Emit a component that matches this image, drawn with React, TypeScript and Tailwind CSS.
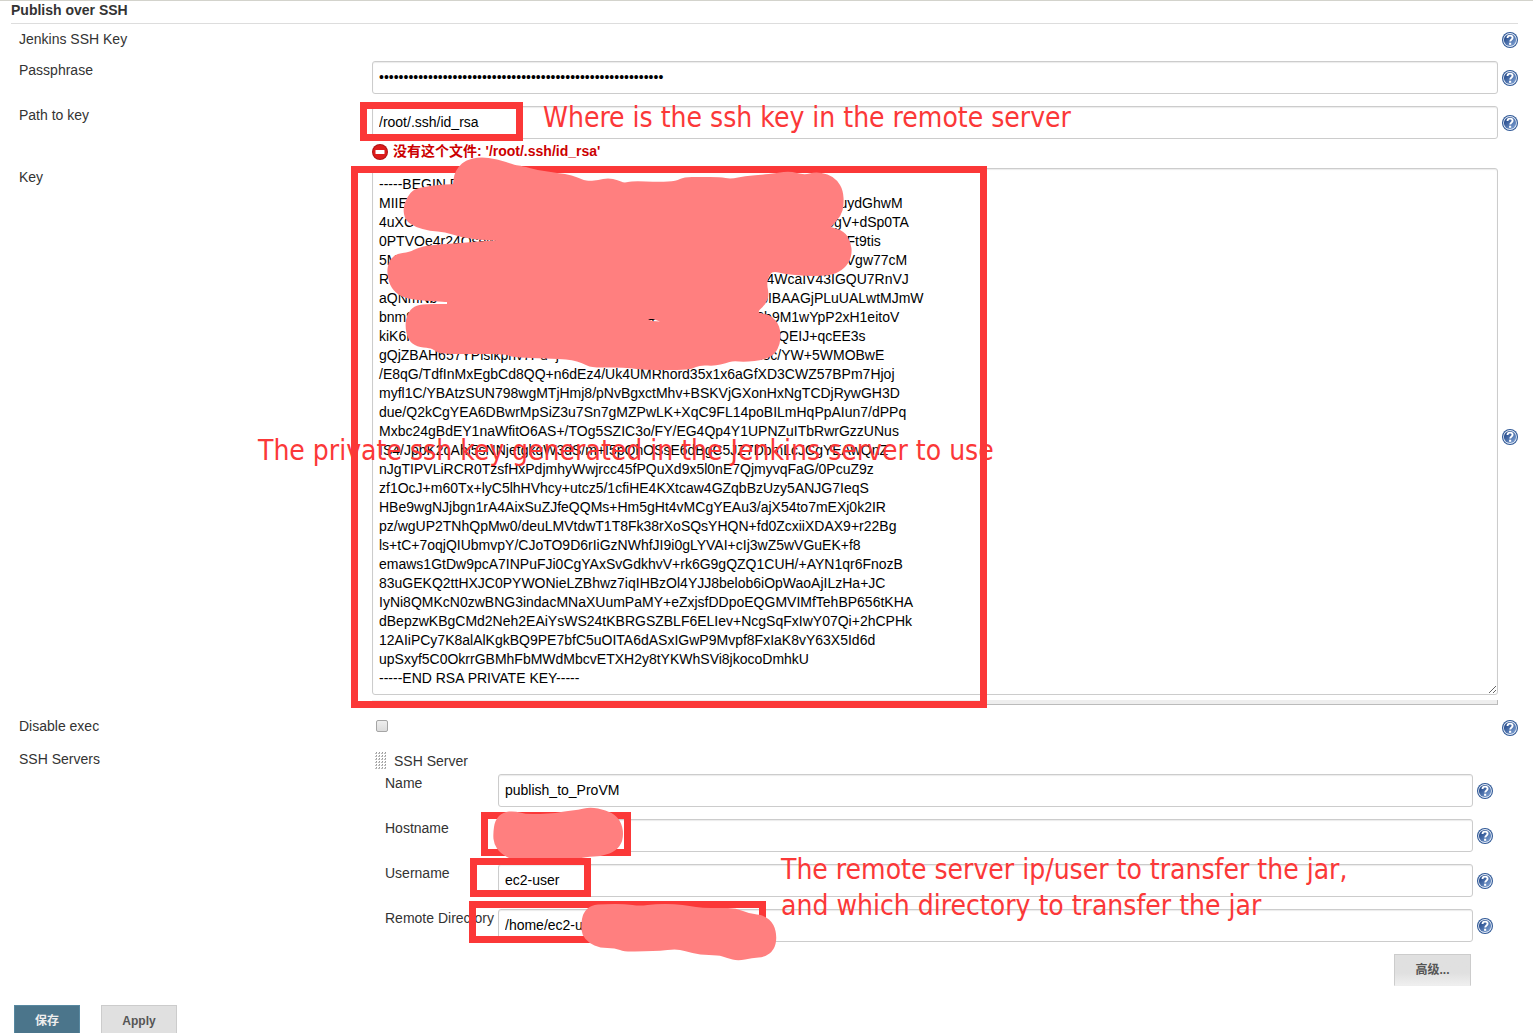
import React from "react";

type Point = [number, number];

/* Closed smooth outline through the midpoints of the given points. */
function smooth(points: Point[]): string {
  const mid = (a: Point, b: Point): Point => [(a[0] + b[0]) / 2, (a[1] + b[1]) / 2];
  const start = mid(points[points.length - 1], points[0]);
  let d = `M${start[0]} ${start[1]}`;
  points.forEach((p, i) => {
    const m = mid(p, points[(i + 1) % points.length]);
    d += `Q${p[0]} ${p[1]} ${m[0]} ${m[1]}`;
  });
  return d + "Z";
}

const KEY_MASK: Point[] = [
  [403, 208], [407, 197], [414, 189], [424, 187], [436, 185], [453, 184], [453, 184], [454, 175], [458, 167], [466, 160],
  [480, 157], [497, 159], [515, 165], [522, 166], [537, 170], [558, 173], [572, 175], [583, 180], [590, 181],
  [598, 180], [608, 178], [618, 180], [624, 183], [632, 181], [660, 182], [676, 181], [684, 177], [700, 177],
  [720, 177], [731, 179], [745, 176], [760, 175], [777, 173], [790, 171], [804, 175], [815, 172], [828, 174],
  [837, 180], [843, 190], [844, 205], [841, 216], [831, 227], [831, 227], [844, 231], [851, 242], [852, 255], [847, 266],
  [836, 274], [822, 276], [805, 276], [785, 274], [772, 271], [768, 278], [767, 285], [769, 295], [766, 304],
  [756, 313], [768, 314], [777, 321], [781, 332], [780, 344], [775, 354], [764, 360], [745, 362], [733, 361],
  [726, 363], [715, 366], [700, 365], [692, 369], [680, 370], [645, 370], [620, 367], [592, 368], [582, 363],
  [572, 360], [560, 359], [530, 358], [512, 357], [505, 354], [480, 354], [440, 354], [434, 350], [430, 348],
  [417, 347], [408, 340], [405, 326], [407, 314], [414, 306], [425, 304], [447, 304], [447, 304], [447, 302],
  [447, 302], [430, 301], [416, 300], [401, 297], [391, 288], [387, 275], [388, 263], [395, 254], [410, 252],
  [417, 248], [430, 245], [460, 243], [497, 240], [497, 240], [480, 240], [460, 237], [445, 232], [430, 231],
  [415, 227], [405, 220],
];

/* Sliver between two strokes where the text shows through. */
const KEY_HOLE = "M648 319L653 319L660 321.5L652 321Z";

const HOST_MASK: Point[] = [
  [493, 834], [495, 820], [503, 812], [515, 811], [525, 814], [540, 814], [556, 813], [566, 811], [578, 810],
  [590, 807], [606, 810], [617, 816], [623, 827], [623, 841], [616, 851], [603, 856], [585, 857], [575, 860],
  [560, 862], [548, 860], [530, 863], [514, 861], [500, 853], [494, 844],
];

const DIR_MASK: Point[] = [
  [581, 925], [583, 913], [591, 905], [605, 904], [625, 904], [640, 906], [655, 904], [675, 904], [690, 906],
  [702, 908], [720, 908], [736, 908], [750, 914], [764, 915], [774, 924], [777, 938], [774, 950], [765, 957],
  [752, 958], [738, 961], [727, 958], [718, 955], [700, 955], [685, 951], [675, 949], [660, 951], [645, 951],
  [625, 952], [615, 948], [600, 948], [589, 943], [582, 935],
];

const gap = (n: number) => " ".repeat(n);

const KEY_TEXT = [
  "-----BEGIN RSA PRIVATE KEY-----",
  "MIIE" + gap(111) + "uydGhwM",
  "4uXC" + gap(106) + "8gV+dSp0TA",
  "0PTVOe4r24Qsew" + gap(90) + "Ft9tis",
  "5M" + gap(115) + "Vgw77cM",
  "R" + gap(97) + "4WcaIV43IGQU7RnVJ",
  "aQNmNb" + gap(83) + "bIBAAGjPLuUALwtMJmW",
  "bnm9" + gap(60) + "4" + gap(26) + "6b9M1wYpP2xH1eitoV",
  "kiK6R" + gap(93) + "QEIJ+qcEE3s",
  "gQjZBAH657YPlsikphv7Pu" + gap(2) + "j" + gap(48) + "zN8c/YW+5WMOBwE",
  "/E8qG/TdfInMxEgbCd8QQ+n6dEz4/Uk4UMRhord35x1x6aGfXD3CWZ57BPm7Hjoj",
  "myfl1C/YBAtzSUN798wgMTjHmj8/pNvBgxctMhv+BSKVjGXonHxNgTCDjRywGH3D",
  "due/Q2kCgYEA6DBwrMpSiZ3u7Sn7gMZPwLK+XqC9FL14poBILmHqPpAIun7/dPPq",
  "Mxbc24gBdEY1naWfitO6AS+/TOg5SZIC3o/FY/EG4Qp4Y1UPNZuITbRwrGzzUNus",
  "IS4/JpbK2cAhi5sNNjetgkqW3dS/m+I5pQhOSsE6dBgC5JZ7DbmLcJCgYEAwQnZ",
  "nJgTIPVLiRCR0TzsfHxPdjmhyWwjrcc45fPQuXd9x5l0nE7QjmyvqFaG/0PcuZ9z",
  "zf1OcJ+m60Tx+lyC5lhHVhcy+utcz5/1cfiHE4KXtcaw4GZqbBzUzy5ANJG7IeqS",
  "HBe9wgNJjbgn1rA4AixSuZJfeQQMs+Hm5gHt4vMCgYEAu3/ajX54to7mEXj0k2IR",
  "pz/wgUP2TNhQpMw0/deuLMVtdwT1T8Fk38rXoSQsYHQN+fd0ZcxiiXDAX9+r22Bg",
  "ls+tC+7oqjQIUbmvpY/CJoTO9D6rIiGzNWhfJI9i0gLYVAI+cIj3wZ5wVGuEK+f8",
  "emaws1GtDw9pcA7INPuFJi0CgYAxSvGdkhvV+rk6G9gQZQ1CUH/+AYN1qr6FnozB",
  "83uGEKQ2ttHXJC0PYWONieLZBhwz7iqIHBzOl4YJJ8belob6iOpWaoAjILzHa+JC",
  "IyNi8QMKcN0zwBNG3indacMNaXUumPaMY+eZxjsfDDpoEQGMVIMfTehBP656tKHA",
  "dBepzwKBgCMd2Neh2EAiYsWS24tKBRGSZBLF6ELIev+NcgSqFxIwY07Qi+2hCPHk",
  "12AIiPCy7K8alAlKgkBQ9PE7bfC5uOITA6dASxIGwP9Mvpf8FxIaK8vY63X5Id6d",
  "upSxyf5C0OkrrGBMhFbMWdMbcvETXH2y8tYKWhSVi8jkocoDmhkU",
  "-----END RSA PRIVATE KEY-----",
].join("\n");

const FIELD =
  "block h-[33px] w-full min-w-0 flex-1 rounded-[3px] border border-[#ccc] bg-white px-[6px] pb-[2px] text-[14px] leading-[19px] text-black shadow-[inset_0_1px_1px_rgba(0,0,0,0.08)] outline-none";
const BOX = "pointer-events-none absolute border-[7px] border-[#fb3838]";
const NOTE =
  "pointer-events-none absolute whitespace-nowrap font-['DejaVu_Sans_Condensed','Noto_Sans',sans-serif] text-[28px] leading-9 text-[#fb3838]";

function Help() {
  return (
    <button type="button" aria-label="Help" className="block size-4 shrink-0">
      <svg viewBox="0 0 16 16" className="block size-4">
        <defs>
          <linearGradient id="helpFill" x1="0" y1="0" x2="1" y2="1">
            <stop offset="0.2" stopColor="#2a4f8f" />
            <stop offset="1" stopColor="#86a9da" />
          </linearGradient>
        </defs>
        <circle cx="8" cy="8" r="8" fill="#2f5896" />
        <circle cx="8" cy="8" r="6.9" fill="#e9eff8" />
        <circle cx="8" cy="8" r="6.1" fill="url(#helpFill)" />
        <path
          d="M5.5 6C5.5 4.3 6.6 3.6 8.1 3.6S10.6 4.5 10.6 5.8C10.6 7.5 8.2 7.4 8.2 9.6"
          fill="none"
          stroke="#fff"
          strokeWidth="1.9"
        />
        <rect x="7.1" y="10.7" width="2.1" height="2.1" fill="#fff" />
      </svg>
    </button>
  );
}

function Mask({
  points,
  hole = "",
  box,
  className,
}: {
  points: Point[];
  hole?: string;
  box: string;
  className: string;
}) {
  return (
    <svg viewBox={box} className={`pointer-events-none absolute ${className}`} aria-hidden="true">
      <path d={smooth(points) + hole} fill="#ff7f7f" fillRule="evenodd" />
    </svg>
  );
}

function Row({ label, htmlFor, children }: { label: string; htmlFor?: string; children?: React.ReactNode }) {
  return (
    <div className="flex items-start">
      <label htmlFor={htmlFor} className="w-[361px] shrink-0 pl-2">
        {label}
      </label>
      <div className="relative min-w-0 flex-1">{children}</div>
    </div>
  );
}

function ServerRow({
  label,
  id,
  value,
  children,
}: {
  label: string;
  id: string;
  value: string;
  children?: React.ReactNode;
}) {
  return (
    <div className="flex items-start">
      <label htmlFor={id} className="w-[113px] shrink-0 whitespace-nowrap">
        {label}
      </label>
      <div className="relative flex min-w-0 flex-1 items-center gap-1">
        <input id={id} type="text" defaultValue={value} className={FIELD} />
        <Help />
        {children}
      </div>
    </div>
  );
}

export default function App() {
  return (
    <main className="h-screen overflow-hidden border-t border-[#d3d3cc] bg-white font-['Liberation_Sans','Noto_Sans_CJK_SC',sans-serif] text-[14px] leading-[19px] text-[#333]">
      <form className="pl-[11px] pr-[15px]" onSubmit={(e) => e.preventDefault()}>
        <h1 className="h-[23px] border-b border-[#ddd] font-bold">Publish over SSH</h1>

        <div className="flex items-start justify-between pt-[6px] pb-3 pl-2">
          <span>Jenkins SSH Key</span>
          <div className="pt-[2px]">
            <Help />
          </div>
        </div>

        <div className="space-y-3">
          <Row label="Passphrase" htmlFor="passphrase">
            <div className="flex items-center gap-1">
              <input id="passphrase" type="password" defaultValue={"x".repeat(58)} className={FIELD} />
              <Help />
            </div>
          </Row>

          <Row label="Path to key" htmlFor="path">
            <div className="flex items-center gap-1">
              <input id="path" type="text" defaultValue="/root/.ssh/id_rsa" className={FIELD} />
              <Help />
            </div>
            <div className={`${BOX} -left-3 -top-1 h-[39px] w-[163px]`} />
            <p className={`${NOTE} left-[171px] top-[-6px]`}>Where is the ssh key in the remote server</p>
            <p className="flex h-[17px] items-center gap-[5px] pt-[8px] font-bold text-[#c00]">
              <svg viewBox="0 0 16 16" className="size-4 shrink-0" aria-hidden="true">
                <circle cx="8" cy="8" r="8" fill="#b01212" />
                <circle cx="8" cy="8" r="7" fill="#dc1c1c" />
                <rect x="3.5" y="6" width="9" height="4" rx="0.6" fill="#fff" />
              </svg>
              没有这个文件: '/root/.ssh/id_rsa'
            </p>
          </Row>

          <Row label="Key" htmlFor="key">
            <div className="flex items-center gap-1">
              <div className="min-w-0 flex-1">
                <textarea
                  id="key"
                  rows={27}
                  spellCheck={false}
                  defaultValue={KEY_TEXT}
                  className="block w-full resize-y overflow-hidden rounded-[3px] border border-[#ccc] bg-white p-[6px] text-[14px] leading-[19px] text-black shadow-[inset_0_1px_1px_rgba(0,0,0,0.08)] outline-none"
                />
                <div className="mt-[5px] h-[5px] border-b border-r border-[#bbb] bg-[#eee]" />
              </div>
              <Help />
            </div>
            <div className={`${BOX} -left-[21px] -top-[2px] h-[542px] w-[636px]`} />
            <Mask
              points={KEY_MASK}
              hole={KEY_HOLE}
              box="380 150 480 230"
              className="-top-[18px] left-2 h-[230px] w-[480px]"
            />
            <p className={`${NOTE} -left-[114px] top-[265px]`}>
              The private ssh key generated in the Jenkins server to use
            </p>
          </Row>

          <Row label="Disable exec" htmlFor="disable">
            <div className="flex h-[21px] items-start justify-between pt-[3px]">
              <input
                id="disable"
                type="checkbox"
                className="ml-1 size-3 appearance-none rounded-[2px] border border-[#a5a5a5] bg-linear-to-b from-[#efefef] to-[#dcdcdc]"
              />
              <Help />
            </div>
          </Row>

          <Row label="SSH Servers">
            <div className="flex h-6 items-start pl-[3px] pt-[2px]">
              <svg viewBox="0 0 12 18" className="h-[18px] w-3" aria-hidden="true">
                <defs>
                  <pattern id="grip" width="3" height="3" patternUnits="userSpaceOnUse">
                    <rect x="0" y="1" width="2" height="1" fill="#bbb" />
                    <rect x="1" y="0" width="1" height="1" fill="#999" />
                  </pattern>
                </defs>
                <rect width="12" height="18" fill="url(#grip)" />
              </svg>
              <span className="pl-[7px]">SSH Server</span>
            </div>
            <div className="space-y-3 pl-[13px] pr-[25px]">
              <ServerRow label="Name" id="name" value="publish_to_ProVM" />
              <ServerRow label="Hostname" id="host" value="">
                <div className={`${BOX} -left-[17px] -top-[7px] h-[44px] w-[150px]`} />
                <Mask points={HOST_MASK} box="488 800 140 70" className="-left-[10px] -top-[19px] h-[70px] w-[140px]" />
              </ServerRow>
              <ServerRow label="Username" id="user" value="ec2-user">
                <div className={`${BOX} -left-7 -top-[6px] h-[39px] w-[121px]`} />
              </ServerRow>
              <ServerRow label="Remote Directory" id="dir" value="/home/ec2-u">
                <div className={`${BOX} -left-[29px] -top-2 h-[42px] w-[297px]`} />
                <Mask points={DIR_MASK} box="578 899 200 70" className="-top-[10px] left-20 h-[70px] w-[200px]" />
                <p className={`${NOTE} -top-[57px] left-[283px]`}>
                  The remote server ip/user to transfer the jar,
                  <br />
                  and which directory to transfer the jar
                </p>
              </ServerRow>
            </div>
            <div className="flex justify-end pr-[47px] pt-3">
              <button
                type="button"
                className="h-8 w-[77px] border border-[#ccc] border-b-[#eee] bg-linear-to-b from-[#e0e0e0] from-60% to-[#efefef] text-[12px] font-bold text-[#555]"
              >
                高级...
              </button>
            </div>
          </Row>
        </div>

        <div className="flex gap-[21px] pl-[3px] pt-[19px]">
          <button
            type="submit"
            className="h-8 w-[66px] border border-[#5788a0] bg-[#4b758b] text-[12px] font-bold text-[#eee]"
          >
            保存
          </button>
          <button type="button" className="h-8 w-[76px] border border-[#ccc] bg-[#e0e0e0] text-[12px] font-bold text-[#555]">
            Apply
          </button>
        </div>
      </form>
    </main>
  );
}
